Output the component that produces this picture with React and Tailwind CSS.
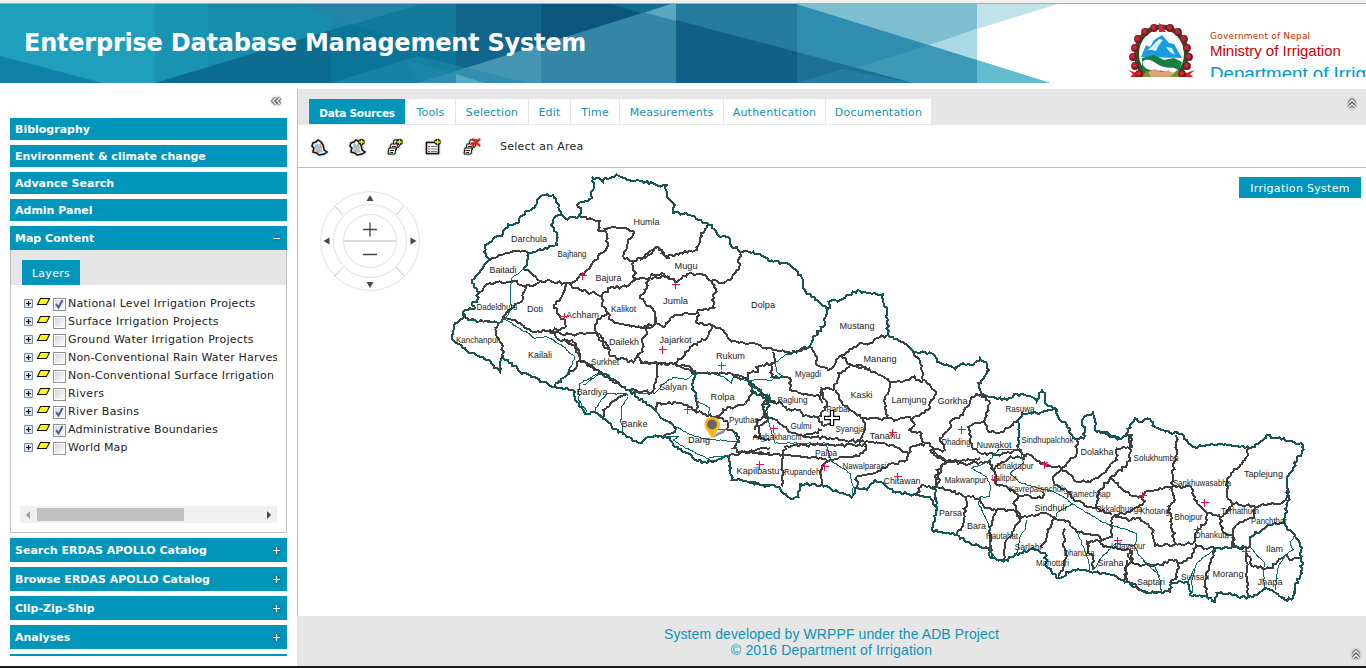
import React from "react";

/* Border lines of the district map. Each sheet has its own origin; points are in thirds of a pixel. */
const SHEETS = [
  {
    x: 440, y: 165,
    outer: [
      "690,105 675,70 684,60 655,62 640,55 600,48 570,45 530,28 508,40 497,38 490,52 470,40 455,35 462,60 452,88 455,100 412,120 422,135 416,152 410,160 375,160 362,148 358,120 340,90 322,88 300,95 288,120 240,155 235,175 205,178 190,205 135,240 132,260 150,285 130,305 118,325 95,345 115,385 110,410 95,415 105,430 70,440 72,455 45,475 35,520 50,535 75,550 95,565 130,575 160,600 180,620 185,575 215,595 240,620 270,630 300,650 345,665",
      "362,150 345,155 332,180 350,210 350,240 265,265 262,300 250,312",
    ],
    dark: [
      "150,285 185,270 215,260 262,262", "115,385 150,355 210,352 230,348 250,362 280,362 300,345",
      "250,312 275,325 300,347 380,355", "255,362 250,400 215,430 190,455 175,475 165,490",
      "70,445 90,465 130,470 170,472", "170,485 170,515 188,545 188,575", "188,458 240,475 280,500 330,495 375,490",
      "380,355 365,395 342,420 358,450 375,470 375,490", "416,152 450,160 480,168 475,195 500,205 500,250 465,285 440,315 410,345 380,355",
      "490,190 520,185 550,190 582,200 560,240 550,275 580,290 585,345 560,365 510,368 485,392 420,375 380,355",
      "575,288 620,275 655,245 680,280 690,278", "580,340 630,340 690,335", "485,392 485,415 505,445 510,465",
      "625,338 620,370 600,400 640,435 648,470 630,490 575,485 510,465", "330,495 365,508 410,508 440,505 470,505 490,540 510,555 510,572 580,592 595,565",
      "505,445 470,465 465,495 490,520 510,555", "625,488 605,530 608,560 590,575 605,592 690,595",
      "330,495 350,520 380,530 405,540 420,580 410,605 380,630 345,662", "375,530 395,525 412,550 420,585", "420,585 470,615 540,660",
    ],
    thin: [
      "250,312 215,340 210,400 215,430 205,450 175,475 80,465", "190,460 240,490 285,520 320,515 370,545 405,578 380,630 345,658", "430,660 480,625",
    ],
  },
  {
    x: 540, y: 340,
    outer: [
      "45,140 100,150 110,185 135,222 155,215 180,225 215,260 260,290 305,310 325,290 390,292 400,315 440,340 485,368 530,362 565,350 575,420 640,425 675,440 690,438",
      "180,95 230,125 265,150 340,205", "470,100 458,140 470,175 475,200", "625,122 690,175",
    ],
    dark: [
      "120,60 180,95 230,125 265,150 340,205 365,235 400,255", "350,70 350,95 345,130 335,158 280,148 262,150",
      "405,70 430,85 470,100", "265,165 240,170 190,210 188,240", "345,215 350,190 410,188 440,195 465,212 490,222 530,232",
      "470,100 530,98 600,108 625,122", "635,148 640,160 610,195 550,208 530,232", "400,255 405,275 370,290",
      "475,200 468,212", "530,225 565,250 560,268 590,280 598,305 580,325 600,335 690,325", "565,350 600,338 690,340",
      "690,165 665,195 685,240 655,260 660,290 640,292 690,300",
    ],
    thin: [
      "180,98 120,130 115,180 140,215", "265,162 205,160 180,185 165,210 185,235", "265,170 245,200 243,250 250,280",
      "340,205 365,235 405,260 455,285 500,298 590,305", "475,185 510,205 505,225", "370,290 415,290 400,300 420,315 450,330 500,355 570,345",
      "262,150 300,160 345,160 365,135 400,112 440,118 470,98", "500,95 550,110 575,130 580,112 625,122", "520,268 580,270 595,305",
    ],
  },
  {
    x: 640, y: 200,
    outer: [
      "690,280 660,272 620,285 600,300 565,305 570,325 560,325 515,290 490,265 490,240 460,205 440,190 400,185 370,170 340,155 300,155 270,130 265,110 240,112 215,75 195,70 150,45 100,38 105,15 90,0",
      "565,325 550,380 520,410 510,440 440,462", "325,540 340,575 390,605",
    ],
    dark: [
      "200,75 180,115 172,150 120,158 80,172 55,142 0,180", "300,160 298,200 270,240 240,250 215,240",
      "30,228 65,220 105,245 150,220 190,225 215,245", "215,245 230,275 215,300 225,325 175,330 170,370 215,375",
      "48,350 48,370", "0,385 48,370 70,382 100,350 140,340 170,340", "215,375 250,390 275,425 340,430 400,450 450,458 510,440",
      "215,375 200,415 150,440 130,470 105,490", "0,487 100,492 150,500 170,520",
      "400,455 405,480 395,490 345,500 355,515 325,520 325,540", "395,490 395,530 450,535 450,570 540,590 545,610",
      "280,530 325,540", "510,440 530,470 530,495 565,510 605,465 625,455 660,430 690,430",
      "605,465 630,495 690,505", "630,500 595,520 580,570 545,565 540,590",
    ],
    thin: ["440,462 405,490 410,515 430,528 395,540 325,540"],
  },
  {
    x: 750, y: 330,
    outer: [
      "360,-110 380,-108 398,-107 400,-85 410,-60 412,-25 415,15 460,35 490,65 545,70 570,98 615,118 640,100 670,105 690,85 708,95 715,120",
      "0,455 30,465 85,470 100,490 125,508 145,500 150,462 215,465 245,480 290,495 305,502 315,475 350,480 375,450 400,460 430,485 500,495 540,502 560,535",
      "0,160 60,205 50,240",
    ],
    dark: [
      "360,40 390,22 415,15", "300,103 340,110 380,130 425,155 470,150 485,140 520,155",
      "490,65 510,100 520,150 558,185 535,240 485,270", "425,155 405,205 410,265", "258,180 275,215 300,240 340,265 410,265 440,270 480,260 495,285",
      "495,285 475,300 515,310 515,345", "340,265 345,300 330,335", "160,320 240,325 330,335 430,345 475,370 485,350 540,340",
      "100,375 105,350 160,345 350,345", "0,365 50,372 100,375 170,380 240,390 310,380 340,370 350,345",
      "98,375 98,470", "240,390 215,410 215,465", "210,180 230,215 225,240 205,260 215,285 250,285", "215,300 190,310 160,318",
      "60,215 95,220 110,240 150,240 160,258 205,265", "75,212 40,220 45,260 20,270 15,300", "45,265 80,270 100,290 130,310 160,318",
      "475,370 470,390 430,400 370,430 320,440 320,470", "540,340 560,380 590,395 575,405 570,430 555,440 560,472",
      "590,395 640,390 690,385", "500,495 515,465 560,472",
    ],
    thin: ["50,240 60,290 75,340 230,340 240,390 300,430 310,470 305,500"],
  },
  {
    x: 930, y: 370,
    outer: [
      "20,412 5,480 40,488 80,495 130,525 175,535 180,560 220,575 270,550 310,535 345,550 350,590 385,625 430,600 480,605 530,612 580,630 620,650 660,670 690,665",
      "570,205 545,200 520,185 500,185 490,125 455,150 465,180 460,205 430,205 410,165 390,150 380,120 345,100 345,70 335,58 320,95 305,80 260,72 230,90 155,72 145,40 155,30 180,0",
      "380,120 320,130 275,130 265,150 265,235", "0,352 15,355 20,412",
    ],
    dark: [
      "155,72 125,80 100,135 65,150 55,180 30,205 45,240 0,240", "155,72 180,100 165,150 115,170 125,230 150,250 200,255 275,240",
      "0,240 40,270 100,280 160,280 180,275 190,300", "165,155 175,185 220,185 265,150", "50,275 20,300 30,330 15,352",
      "15,352 60,360 100,378 150,385 165,415 200,420 250,420 270,440", "110,380 100,460 80,495", "200,420 180,470 185,560",
      "275,440 240,500 225,520 220,575", "370,440 350,500 335,535", "265,445 320,435 345,430 370,440 420,460 440,485 500,495 520,510",
      "405,475 400,520 410,560 400,600 385,620", "270,440 250,400 265,375 250,360 200,345 190,300", "265,375 335,385 340,365",
      "190,300 235,265 300,255 345,285 395,295 440,250 440,210", "265,240 285,255 280,270", "395,295 370,320 375,345 420,370 430,385 470,410 500,415 545,435",
      "395,295 440,335 480,335 520,310 560,270 560,235 600,235 600,195", "600,235 600,265 590,285 540,325 505,365 500,415",
      "540,325 600,375 640,385", "640,380 640,400 600,425 555,435 545,460 545,500 510,515 470,515 475,550 490,560 490,600",
      "510,520 520,530 600,540 605,575 590,585 585,630",
    ],
    thin: [
      "265,238 205,240 175,275 125,295 170,320 180,345 180,380 150,380 145,400 175,460 180,540 200,570",
      "275,240 275,260 280,280 240,310 265,335 310,350 370,365 400,380 440,410 500,445 520,458 560,470 620,490 615,530 625,555 660,590 690,620",
      "380,440 380,430 430,400", "440,485 460,530 475,570 480,600", "560,520 520,555 490,600", "560,520 615,528", "290,450 285,480 270,500 260,550 220,575",
    ],
  },
  {
    x: 1100, y: 400,
    outer: [
      "80,545 120,570 150,580 210,575 215,550 245,545 265,550 270,585 320,590 345,605 350,580 390,580 420,595 445,590 470,585 490,568 515,570 555,600 580,595 585,560 605,520 605,470 600,430 585,405 560,380 553,370 560,320 568,290 560,240 580,210 590,175 605,160 610,135 580,125 530,115 500,105 480,125 450,145 390,135 350,135 320,135 285,142 260,120 245,102 210,98 165,80 150,58 120,65 105,55 90,75 80,100 60,118 0,95",
      "553,370 510,375 450,410 450,440 345,445",
    ],
    dark: [
      "80,100 95,105 95,145", "228,105 230,150 220,200 215,262 250,262 275,262", "130,295 135,275 180,265 215,262",
      "215,265 225,300 205,320 215,370 225,430", "40,345 55,350 85,362 120,355 155,385 165,438 225,432 280,430 290,395 320,360 320,340 290,310 275,265",
      "445,145 435,180 400,215 380,240 380,290 395,310 390,330 360,350 365,390 400,410 400,440", "320,340 360,345",
      "395,310 460,318 545,310 560,290 565,265", "465,318 460,355 430,365 400,385 400,440 440,445", "440,460 460,500 510,505 545,475 560,465 570,480 600,475",
      "440,445 440,500 440,560 445,590", "345,445 330,490 315,545 320,590", "285,430 290,440 345,445",
      "95,450 85,470 100,490 125,497 180,495 215,480 240,488 270,475 290,435", "235,490 230,530 210,550", "80,480 80,545",
    ],
    thin: [
      "450,440 470,465 495,490 490,520 495,570", "585,405 570,430 580,450 555,465 535,500 525,570", "345,445 290,490 265,545", "285,505 275,545 278,580", "130,485 165,500 180,540 185,575",
    ],
  },
];

/* Breaks straight runs into short, uneven steps so that borders look surveyed. */
function roughen(points, sheet, amount) {
  const p = points.split(" ").map((s) => s.split(",").map((v) => Number(v) / 3));
  const out = [];
  const noise = (n) => {
    const v = Math.sin(n * 12.9898 + sheet * 78.233) * 43758.5453;
    return v - Math.floor(v) - 0.5;
  };
  for (let i = 0; i < p.length - 1; i++) {
    const [ax, ay] = p[i];
    const [bx, by] = p[i + 1];
    const len = Math.hypot(bx - ax, by - ay) || 1;
    const steps = Math.max(1, Math.round(len / 2.4));
    for (let k = 0; k < steps; k++) {
      const t = k / steps;
      const x = ax + (bx - ax) * t;
      const y = ay + (by - ay) * t;
      const d = k === 0 ? 0 : noise(x * 1.7 + y * 2.3) * amount;
      out.push([x - ((by - ay) / len) * d, y + ((bx - ax) / len) * d]);
    }
  }
  out.push(p[p.length - 1]);
  return out.map(([x, y]) => x.toFixed(1) + "," + y.toFixed(1)).join(" ");
}

/* name, centre x, baseline y, width, font size */
const LABELS = [
  ["Humla", 646.5, 225, 26, 9.5], ["Darchula", 529, 242, 36, 9.5], ["Bajhang", 572, 257, 29, 8.4], ["Baitadi", 503, 273, 27, 9.5], ["Bajura", 608.5, 281, 26, 9.5],
  ["Mugu", 686, 269, 23, 9.5], ["Jumla", 675.5, 304, 25, 9.5], ["Dolpa", 763, 308, 24, 9.5], ["Dadeldhura", 497, 310, 41, 8.4], ["Doti", 535, 312, 16, 9.5],
  ["Achham", 582.5, 318, 33, 9.5], ["Kalikot", 623.5, 312, 25, 8.4], ["Kanchanpur", 477.5, 343, 43, 8.4], ["Kailali", 540, 358, 24, 9.5], ["Dailekh", 624, 345, 30, 9.5],
  ["Surkhet", 605, 365, 28, 8.4], ["Jajarkot", 675.5, 343, 32, 9.5], ["Rukum", 730.5, 359, 29, 9.5], ["Mustang", 857, 329, 35, 9.5], ["Manang", 880, 362, 33, 9.5],
  ["Myagdi", 808, 377, 26, 8.4], ["Salyan", 673, 390, 28, 9.5], ["Rolpa", 722.5, 400, 24, 9.5], ["Bardiya", 592, 395, 31, 9.5], ["Baglung", 792.5, 403, 30, 8.4],
  ["Kaski", 861.5, 398, 22, 9.5], ["Lamjung", 909, 403, 35, 9.5], ["Gorkha", 952.5, 404, 30, 9.5], ["Parbat", 838, 412, 23, 8.4], ["Rasuwa", 1020, 412, 29, 8.4],
  ["Banke", 634.5, 427, 26, 9.5], ["Dang", 699, 443, 22, 9.5], ["Pyuthan", 744, 423, 30, 8.4], ["Gulmi", 801, 429, 21, 8.4], ["Syangja", 850, 432, 29, 8.4],
  ["Tanahu", 885, 439, 31, 9.5], ["Dhading", 956, 445, 29, 8.4], ["Nuwakot", 994, 448, 35, 9.5], ["Sindhupalchok", 1047.5, 443, 52, 8.4], ["Dolakha", 1097, 455, 33, 9.5],
  ["Arghakhanchi", 777, 440, 49, 8.4], ["Palpa", 826, 456, 22, 9.5], ["Kapilbastu", 758, 474, 43, 9.5], ["Rupandehi", 803, 475, 38, 8.4], ["Nawalparasi", 864.5, 469, 44, 8.4],
  ["Chitawan", 902, 484, 37, 9.5], ["Bhaktapur", 1015, 469, 37, 8.4], ["Lalitpur", 1004, 481, 25, 8.4], ["Makwanpur", 965.5, 483, 42, 8.4], ["Kavrepalanchok", 1037, 492, 56, 8.4],
  ["Solukhumbu", 1156, 461, 45, 8.4], ["Taplejung", 1263.5, 477, 39, 9.5], ["Sankhuwasabha", 1202, 486, 58, 8.4], ["Ramechhap", 1089, 497, 43, 8.4], ["Okkaldhunga", 1119, 512, 47, 8.4],
  ["Khotang", 1155, 514, 30, 8.4], ["Sindhuli", 1050.5, 511, 32, 9.5], ["Parsa", 950.5, 516, 23, 9.5], ["Bara", 976.5, 529, 19, 9.5], ["Rautahat", 1002, 539, 32, 8.4],
  ["Sarlahi", 1028, 550, 27, 9.5], ["Dhanusa", 1079, 556, 31, 8.4], ["Mahottari", 1052.5, 566, 33, 8.4], ["Siraha", 1110.5, 566, 26, 9.5], ["Udayapur", 1128, 549, 34, 8.4],
  ["Bhojpur", 1188.5, 520, 28, 8.4], ["Terhathum", 1240, 514, 38, 8.4], ["Panchthar", 1269, 524, 36, 8.4], ["Dhankuta", 1212, 538, 34, 8.4], ["Ilam", 1274.5, 552, 17, 9.5],
  ["Saptari", 1151, 585, 28, 9.5], ["Sunsari", 1195, 580, 28, 8.4], ["Morang", 1228, 577, 31, 9.5], ["Jhapa", 1270, 585, 25, 9.5],
];

const CROSSES = [
  [582.5, 275.5], [564.5, 316.5], [675.5, 284.5], [662.5, 349.5], [773.5, 428.5], [759.5, 464.5], [824.5, 466.5], [892.5, 432.5], [897.5, 476.5],
  [994.5, 479.5], [1044.5, 464.5], [1067.5, 493.5], [1142.5, 495.5], [1117.5, 540.5], [1204.5, 502.5], [1197.5, 529.5], [1245.5, 551.5],
  [721.5, 365.5], [687.5, 409.5], [961.5, 429.5],
];

function NepalMap() {
  return (
    <svg className="absolute inset-0 h-full w-full" viewBox="298 168 1068 448" fontFamily="'Liberation Sans', Arial, sans-serif">
      {SHEETS.map((s, i) => (
        <g key={i} transform={`translate(${s.x} ${s.y})`} fill="none" strokeLinejoin="miter" shapeRendering="crispEdges">
          {s.dark.map((d, k) => <polyline key={"d" + k} points={roughen(d, 1, 3)} stroke="#3f3f3f" strokeWidth="2" />)}
          {s.outer.map((d, k) => (
            <g key={"o" + k}>
              <polyline points={roughen(d, 1, 3)} stroke="#3f3f3f" strokeWidth="2.100" />
              <polyline points={roughen(d, 1, 3)} stroke="#046060" strokeWidth="1.300" />
            </g>
          ))}
          {s.thin.map((d, k) => <polyline key={"t" + k} points={roughen(d, 1, 1.2)} stroke="#0b6a6a" strokeWidth="1" />)}
        </g>
      ))}
      {LABELS.map(([name, x, y, w, size]) => (
        <text key={name} x={x - w / 2} y={y} fontSize={size} textLength={w} lengthAdjust="spacingAndGlyphs" fill="#222">{name}</text>
      ))}
      <g stroke="#ee1144" strokeWidth="1" shapeRendering="crispEdges">
        {CROSSES.map(([x, y]) => <path key={x} d={`M${x - 3.5} ${y}h8M${x} ${y - 3.5}v8`} />)}
      </g>
      <path d="M1041 463l7-1-2 5z" fill="#ee1144" />
      <path d="M712 438l5-5 9-4-2 4z" fill="#777" opacity=".8" />
      <path d="M712 438.500L706.500 430a7.800 7.800 0 1 1 11.500 0z" fill="#fdb913" />
      <circle cx="712" cy="424.500" r="5" fill="#666" />
      <path d="M832 410v16M824 418h16" stroke="#000" strokeWidth="4.500" />
      <path d="M832 411v14M825 418h14" stroke="#fff" strokeWidth="2" />
    </svg>
  );
}

function PanControl() {
  return (
    <svg className="absolute top-[22px] left-[21px]" width="102" height="102" viewBox="0 0 102 102" fill="none" stroke="#e2e2e2">
      <circle cx="51" cy="51" r="49.500" fill="#fff" />
      <circle cx="51" cy="51" r="36.500" />
      <circle cx="51" cy="51" r="26.500" />
      <path d="M25 51h52" strokeWidth="1.500" stroke="#ccc" />
      <path d="M16 16l8 9M85 16l-8 9M16 86l8-9M85 86l-8-9" stroke="#c8c8c8" />
      <path d="M44 39.500h14M51 32.500v14M44 64.500h14" stroke="#444" strokeWidth="1.300" />
      <path d="M51 5l3.500 6h-7zM51 98l3.500-6h-7zM4.500 51l6-3.500v7zM97.500 51l-6-3.500v7z" fill="#484848" stroke="none" />
    </svg>
  );
}

function HeaderArt() {
  return (
    <svg className="absolute inset-0" width="1366" height="79" viewBox="0 4 1366 79">
      <path d="M0 4h155v79H0z" fill="#209fbc" />
      <path d="M155 4h53v79h-53z" fill="#1a93b2" />
      <path d="M208 4h123v79H208z" fill="#168dad" />
      <path d="M331 4h125v79H331z" fill="#13799d" />
      <path d="M331 4h89l-65 19.400-24 7z" fill="#1b86a7" />
      <path d="M295 4h125l-66 20z" fill="#2383a8" />
      <path d="M0 56l103 27H0z" fill="#1182a7" />
      <path d="M155 83L331 30v53z" fill="#0c6b91" />
      <path d="M331 30l20-6 132 39-28 8v12H331z" fill="#0b7499" />
      <path d="M331 83l74-23 51 14v9z" fill="#1682a6" />
      <path d="M456 4h85v79h-85z" fill="#11658c" />
      <path d="M541 4h135v79H541z" fill="#0b577f" />
      <path d="M612 4h64v20z" fill="#146e94" />
      <path d="M418 83L671 4h5v79z" fill="#3386a6" />
      <path d="M456 71l85-26.500V83H418z" fill="#4495b1" />
      <path d="M405 60l13-4 110 27H420z" fill="#208aac" opacity=".55" />
      <path d="M456 74l29 9h-29z" fill="#58aac3" />
      <path d="M645 12.500L671 4h5v17z" fill="#5ca7c0" />
      <path d="M676 4h121v79H676z" fill="#257b9e" />
      <path d="M676 20l121 32v31H676z" fill="#116088" />
      <path d="M797 4h180v25L929 46z" fill="#7dbfd1" />
      <path d="M797 4l253 79H797z" fill="#2f8daf" />
      <path d="M977 4h81l-81 25z" fill="#c0e3ea" />
      <path d="M929 45l48-16v31z" fill="#a9dae5" />
      <path d="M929 45l48 15v23H808z" fill="#3e99b6" />
      <path d="M977 60l73 23h-73z" fill="#63bccd" />
      <path d="M797 52l116 31H797z" fill="#1d6f96" />
      <path d="M797 83l45-14 71 14z" fill="#237da2" />
    </svg>
  );
}

const ROSES = [[26, 4], [17, 8], [10, 15], [7, 24], [5, 33], [7, 42], [11, 50], [42, 4], [50, 8], [56, 15], [59, 24], [61, 33], [59, 42], [54, 50]];

function Emblem() {
  return (
    <svg width="68" height="54" viewBox="0 0 68 54" className="shrink-0">
      <ellipse cx="33.500" cy="31" rx="25" ry="27" fill="none" stroke="#1c5a2c" strokeWidth="5" />
      <ellipse cx="33.500" cy="32" rx="21.500" ry="22" fill="#fff" />
      <path d="M13 34l5-12 4 2 4-7 8-5 7 8 5 1 8 14z" fill="#1b9ce0" />
      <path d="M20 27l7-7 4-4 4 1-4 5-3 6-4-1zM38 24l6 1 3 7-5-3z" fill="#d8f0fc" />
      <path d="M14 35l12-3 10 5 10-2 8 4-3 10-37 2z" fill="#12803f" />
      <path d="M14 39c6-7 12 1 20 4s14-1 17 6c-8 3-14-1-20-1s-16 0-17-9z" fill="#fff" stroke="#444" strokeWidth=".6" />
      <path d="M20 49l7-3 6 3 8-2 6 7H20z" fill="#dda377" />
      <path d="M0 47l9 3 5-3 6 7H2l3-3zM67 47l-9 3-5-3-6 7h18l-3-3z" fill="#d91e2a" />
      <path d="M14 54l5-7 4 7zM42 54l7-7 4 7z" fill="#799326" />
      {ROSES.map(([x, y]) => (
        <g key={x + "-" + y}>
          <circle cx={x} cy={y + 1} r="3.900" fill="#7d1620" />
          <circle cx={x - 0.5} cy={y + 0.5} r="2.400" fill="#c92633" />
        </g>
      ))}
      <path d="M31 0l6 4h-3l4 5h-7z" fill="#e02040" />
    </svg>
  );
}

function Chevrons({ up }) {
  const d = up ? "M4 7l3-3 3 3M4 11l3-3 3 3" : "M7 4L4 7l3 3M11 4L8 7l3 3";
  return (
    <svg width="14" height="14" viewBox="0 0 14 14" fill="none" className="overflow-visible drop-shadow-[0_0_1.5px_#777]">
      <path d={d} stroke="#555" strokeWidth="3" />
      <path d={d} stroke="#fff" strokeWidth="1.400" />
    </svg>
  );
}

function ToolIcon({ kind }) {
  const plus = <path d="M12.500 1v6M9.500 4h6" stroke="#000" strokeWidth="3.600" />;
  const plusIn = <path d="M12.500 1.500v5M10 4h5" stroke="#ffee00" strokeWidth="1.500" />;
  return (
    <svg width="18" height="18" viewBox="0 0 18 18" fill="none" className="shrink-0 overflow-visible drop-shadow-[0_0_1px_#888]">
      {(kind === "map" || kind === "mapadd") && (
        <g>
          <path d="M2 5l3-1 2-2 3 2 2 3 1 5 3 2-3 2-5 1-2-2-4-1 1-4-2-2z" fill="#fff" stroke="#111" strokeWidth="1.500" />
          <path d="M4 7l2-2 3 4 3 5-4 1-1-3-3-2z" fill="#8cc8e8" />
          <path d="M8 6l2-1 1 6-2-1zM4 11l3 1 1 3-3-1z" fill="#e9a060" />
        </g>
      )}
      {(kind === "stack" || kind === "stackdel") && (
        <g fill="#fff" stroke="#111">
          <path d="M7 2h7l-2 7H6z" /><path d="M4 6h7l-2 6H3z" /><path d="M2 10h7l-1 6H1z" />
          <path d="M3 12.500h4M5 8.500h4M8 5h3M3 14.500h3" />
          <path d="M2.500 14.500h1.500M4.500 10.500h1" stroke="#17a340" /><path d="M2.500 12.500h1M7 6.500h1" stroke="#d22" />
        </g>
      )}
      {kind === "list" && (
        <g>
          <path d="M1.500 4.500h12v11h-12z" fill="#fff" stroke="#111" strokeWidth="1.500" />
          <path d="M6 8.500h6M6 11h6M6 13.500h6" stroke="#777" />
          <path d="M3 8.500h2" stroke="#d22" /><path d="M3 11h2" stroke="#36c" /><path d="M3 13.500h2" stroke="#193" />
        </g>
      )}
      {kind !== "map" && kind !== "stackdel" && plus}
      {kind !== "map" && kind !== "stackdel" && plusIn}
      {kind === "stackdel" && <path d="M9 1l8 7M17 1L9 8" stroke="#f01818" strokeWidth="2" />}
    </svg>
  );
}

const LAYERS = [
  ["National Level Irrigation Projects", true, "tracking-[0.26px]"], ["Surface Irrigation Projects", false, "tracking-[0.32px]"],
  ["Ground Water Irrigation Projects", false, "tracking-[0.28px]"], ["Non-Conventional Rain Water Harves", false, "tracking-[0.18px]"],
  ["Non-Conventional Surface Irrigation", false, "tracking-[0.26px]"], ["Rivers", false, "tracking-[0.35px]"], ["River Basins", true, "tracking-[0.3px]"],
  ["Administrative Boundaries", true, "tracking-[0.17px]"], ["World Map", false, "tracking-[0.15px]"],
];

function LayerRow({ name, checked, tracking }) {
  return (
    <div className="flex h-[18px] items-center whitespace-nowrap">
      <svg width="30" height="18" viewBox="0 0 30 18" className="ml-[3px] shrink-0" fill="none">
        <path d="M1.500 5.500h8v8h-8z" fill="#dfe5f0" stroke="#7b8cab" />
        <path d="M3 9.500h5M5.500 7v5" stroke="#111" strokeWidth="1.200" />
        <path d="M17.500 4.500h9l-3 6h-9z" fill="#ffff00" stroke="#111" strokeWidth="1.100" />
      </svg>
      <span className="mt-0.5 flex h-[13px] w-[13px] shrink-0 items-center justify-center border border-[#8e8f8f] bg-gradient-to-br from-[#cfd3d8] to-white ring-1 ring-white ring-inset">
        {checked && <svg width="11" height="11" viewBox="0 0 11 11"><path d="M2 5l2.500 3.500L8.500 1" fill="none" stroke="#4b5f97" strokeWidth="2" /></svg>}
      </span>
      <span className={"ml-[2px] pt-0.5 text-[11px] text-[#222] " + tracking}>{name}</span>
    </div>
  );
}

function Bar({ children, sign, tall }) {
  return (
    <div className={"flex shrink-0 items-center justify-between bg-[#0096bb] pr-1 pl-[5px] text-[11px] font-bold text-white " + (tall ? "h-6" : "h-[22px]")}>
      <span className="pt-0.5">{children}</span>
      {sign && (
        <svg width="13" height="14" viewBox="0 0 13 14" className="rounded-full drop-shadow-[0_0_2px_#013a4a]">
          <path d={sign === "+" ? "M3 7.500h7M6.500 4v7" : "M3 7.500h7"} stroke="#fff" strokeWidth="1.200" />
        </svg>
      )}
    </div>
  );
}

const TABS = [
  ["Tools", "w-[49px]"], ["Selection", "w-[72px]"], ["Edit", "w-[41px]"], ["Time", "w-[48px]"],
  ["Measurements", "w-[103px]"], ["Authentication", "w-[101px]"], ["Documentation", "w-[105px]"],
];

export default function App() {
  return (
    <div className="flex h-[668px] w-[1366px] flex-col overflow-hidden bg-white font-['DejaVu_Sans',Verdana,sans-serif] text-[11px] leading-[14px] text-[#222]">
      <div className="h-1 shrink-0 border-b border-[#aaa] bg-[#f0f0f0]" />
      <header className="relative h-[79px] shrink-0 overflow-hidden">
        <HeaderArt />
        <div className="relative flex h-[73px] items-start overflow-hidden">
          <h1 className="mt-[24px] ml-6 w-[1104px] shrink-0 text-[24px] leading-[30px] font-bold tracking-[-0.22px] whitespace-nowrap text-white">Enterprise Database Management System</h1>
          <div className="mt-[19px] shrink-0"><Emblem /></div>
          <div className="mt-[26px] ml-[14px] shrink-0 whitespace-nowrap">
            <div className="text-[9px] leading-[12px] tracking-[0.2px] text-[#c03000]">Government of Nepal</div>
            <div className="font-['Liberation_Sans',Arial,sans-serif] text-[15px] leading-[18px] text-[#cc0000]">Ministry of Irrigation</div>
            <div className="mt-[2px] font-['Liberation_Sans',Arial,sans-serif] text-[18.7px] leading-[24px] text-[#0099cc]">Department of Irrigation</div>
          </div>
        </div>
      </header>

      <div className="flex h-[583px] shrink-0">
        <aside className="flex w-[297px] shrink-0 flex-col gap-[5px] overflow-hidden pr-[10px] pl-[10px]">
          <div className="flex h-[30px] shrink-0 items-start justify-end pt-[11px] pr-1"><Chevrons /></div>
          <Bar>Biblography</Bar>
          <Bar>Environment &amp; climate change</Bar>
          <Bar>Advance Search</Bar>
          <Bar>Admin Panel</Bar>
          <div className="flex h-[307px] shrink-0 flex-col">
            <Bar tall sign="-">Map Content</Bar>
            <div className="flex flex-1 flex-col border border-t-0 border-[#c0c0c0]">
              <div className="flex h-[35px] items-end bg-[#e6e6e6] pl-[11px]">
                <div className="flex h-[25px] w-[58px] items-center justify-center bg-[#0096bb] pt-0.5 tracking-[0.3px] text-white">Layers</div>
              </div>
              <div className="mr-[9px] ml-[9px] h-[212px] overflow-hidden pt-[9px]">
                {LAYERS.map(([name, on, t]) => <LayerRow key={name} name={name} checked={on} tracking={t} />)}
              </div>
              <div className="mr-[9px] ml-[9px] mt-[9px] flex h-[17px] items-center justify-between bg-[#f0f0f0] px-[6px]">
                <svg width="4" height="8"><path d="M4 0v8L0 4z" fill="#a0a0a0" /></svg>
                <div className="mr-auto ml-[7px] h-[13px] w-[147px] bg-[#c1c1c1]" />
                <svg width="4" height="8"><path d="M0 0v8l4-4z" fill="#444" /></svg>
              </div>
            </div>
          </div>
          <Bar tall sign="+">Search ERDAS APOLLO Catalog</Bar>
          <Bar tall sign="+">Browse ERDAS APOLLO Catalog</Bar>
          <Bar tall sign="+">Clip-Zip-Ship</Bar>
          <Bar tall sign="+">Analyses</Bar>
          <div className="h-[2px] shrink-0 bg-[#0096bb]" />
        </aside>

        <main className="mt-[6px] flex w-[1069px] flex-col">
          <div className="flex h-[36px] shrink-0 items-end justify-between border-l border-[#c0c0c0] bg-[#e6e6e6] pb-px pl-[11px]">
            <div className="flex h-[25px] gap-px">
              <div className="flex w-[96px] items-center justify-center bg-[#0096bb] pt-0.5 text-[10.5px] font-bold tracking-[-0.25px] whitespace-nowrap text-white">Data Sources</div>
              {TABS.map(([t, w]) => (
                <div key={t} className={"flex items-center justify-center bg-white pt-0.5 tracking-[0.2px] whitespace-nowrap text-[#1291b6] " + w}>{t}</div>
              ))}
            </div>
            <div className="mr-[7px] mb-[14px]"><Chevrons up /></div>
          </div>
          <div className="flex h-[43px] shrink-0 items-center gap-[20px] border-b border-l border-[#c0c0c0] pt-0.5 pl-[13px]">
            <ToolIcon kind="map" /><ToolIcon kind="mapadd" /><ToolIcon kind="stack" /><ToolIcon kind="list" /><ToolIcon kind="stackdel" />
            <span className="-ml-px tracking-[0.25px]">Select an Area</span>
          </div>
          <div className="relative h-[448px] shrink-0 border-l border-[#c0c0c0]">
            <NepalMap />
            <PanControl />
            <div className="absolute top-[9px] right-[5px] flex h-[21px] w-[122px] items-center justify-center bg-[#0096bb] pt-0.5 tracking-[0.3px] text-white">Irrigation System</div>
          </div>
          <footer className="relative h-[50px] shrink-0 bg-[#e6e6e6] pt-[10px] text-center font-['Liberation_Sans',Arial,sans-serif] text-[14px] leading-4 text-[#1291b6]">
            <div className="tracking-[0.09px]">System developed by WRPPF under the ADB Project</div>
            <div className="tracking-[0.16px]">© 2016 Department of Irrigation</div>
            <div className="absolute right-[3px] bottom-[5px]"><Chevrons up /></div>
          </footer>
        </main>
      </div>
      <div className="h-[2px] shrink-0 bg-[#1c1c1c]" />
    </div>
  );
}
